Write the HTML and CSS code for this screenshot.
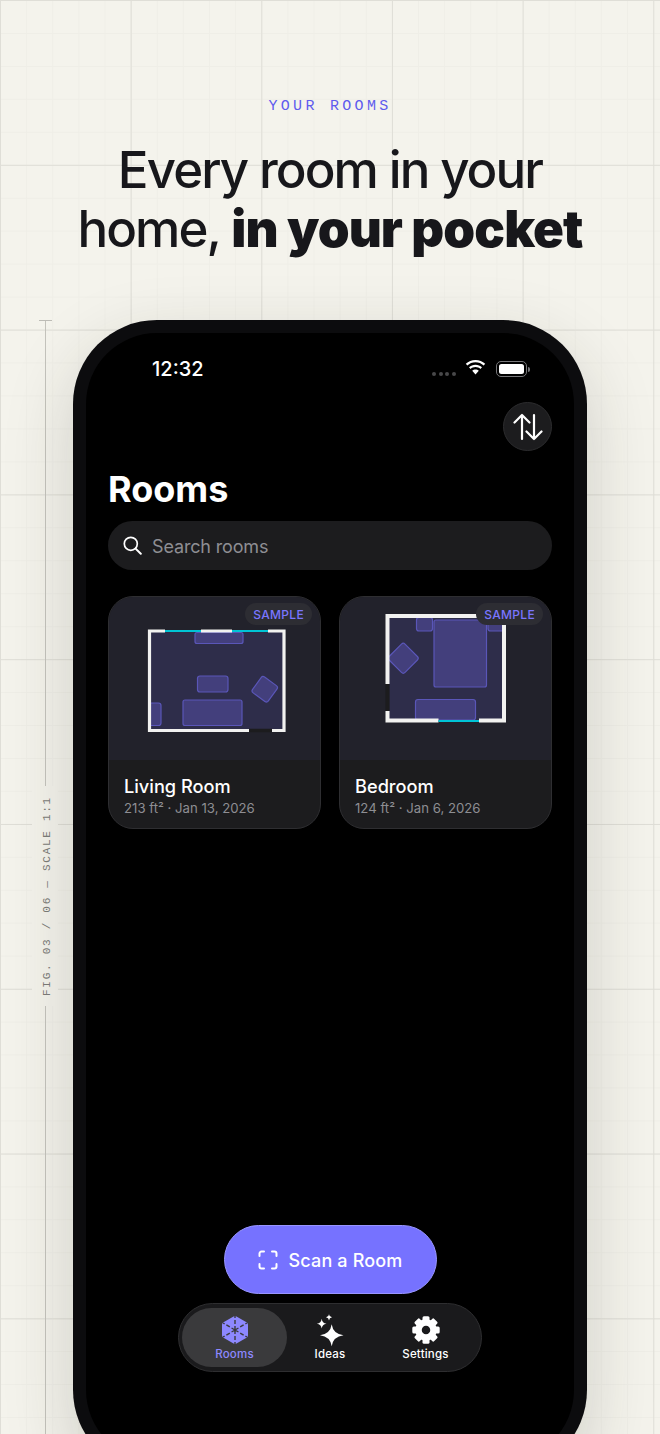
FILE: index.html
```html
<!DOCTYPE html>
<html lang="en">
<head>
    <meta charset="UTF-8">
    <meta name="viewport" content="width=device-width, initial-scale=1.0">
    <title>Your Rooms</title>
    <link rel="stylesheet" href="styles.css">
</head>
<body>
    <div class="page">
        <div class="grid-minor"></div>
        <div class="grid-major"></div>

        <header class="hero">
            <p class="eyebrow">YOUR ROOMS</p>
            <h1 class="headline">Every room in your<br>home, <strong>in your pocket</strong></h1>
        </header>

        <!-- Regla lateral -->
        <div class="ruler">
            <span class="ruler-tick"></span>
            <span class="ruler-line ruler-line-top"></span>
            <span class="ruler-label">FIG. 03 / 06 — SCALE 1:1</span>
            <span class="ruler-line ruler-line-bottom"></span>
        </div>

        <div class="phone">
            <div class="screen">
                <div class="status-bar">
                    <span class="clock">12:32</span>
                    <div class="status-icons">
                        <span class="signal"><i></i><i></i><i></i><i></i></span>
                        <svg class="wifi" width="21" height="16" viewBox="0 0 21 16">
                            <path d="M10.5 2.2c3.2 0 6 1.2 8.2 3.3l1.5-1.7C17.6 1.3 14.2 0 10.5 0S3.4 1.3.8 3.8l1.5 1.7c2.2-2.1 5-3.3 8.2-3.3z" fill="#fff"/>
                            <path d="M10.5 7c1.9 0 3.6.7 4.9 1.9l1.6-1.7C15.2 5.6 13 4.7 10.5 4.7S5.8 5.6 4 7.2l1.6 1.7C6.9 7.700 8.600 7 10.500 7z" fill="#fff"/>
                            <path d="M10.500 9.500c-1.300 0-2.400.5-3.300 1.300l3.300 3.700 3.300-3.700c-.9-.8-2-1.300-3.300-1.300z" fill="#fff"/>
                        </svg>
                        <span class="battery"><span class="battery-level"></span></span>
                        <span class="battery-cap"></span>
                    </div>
                </div>

                <div class="toolbar">
                    <button class="sort-button">
                        <svg width="30" height="28" viewBox="0 0 30 28" fill="none" stroke="#fff" stroke-width="2.2" stroke-linecap="round" stroke-linejoin="round">
                            <path d="M9 26V2M1.500 9.500 9 2l7.500 7.500"/>
                            <path d="M21 2v24M13.500 18.500 21 26l7.500-7.500"/>
                        </svg>
                    </button>
                </div>

                <h2 class="title">Rooms</h2>

                <div class="search">
                    <svg width="19" height="19" viewBox="0 0 19 19" fill="none" stroke="#fff" stroke-width="1.700" stroke-linecap="round">
                        <circle cx="7.800" cy="7.800" r="6.500"/>
                        <path d="m12.600 12.600 5.200 5.200" stroke-width="2"/>
                    </svg>
                    <span class="label-nudge">Search rooms</span>
                </div>

                <div class="cards">
                    <div class="card">
                        <div class="card-preview">
                            <svg class="plan" width="213" height="165" viewBox="0 0 213 165">
                                <rect class="floor" x="41" y="35" width="135" height="99"/>
                                <rect class="item" x="87" y="36.500" width="48" height="11" rx="2"/>
                                <rect class="item" x="89.500" y="80" width="30.500" height="16" rx="2.500"/>
                                <rect class="item" x="75" y="104" width="59" height="25.500" rx="2"/>
                                <rect class="item" x="41" y="107" width="12" height="22.500" rx="2.500"/>
                                <rect class="item" x="147" y="83.500" width="19.500" height="19.500" rx="2.500" transform="rotate(36 156.750 93.250)"/>
                                <path class="wall" d="M57 35H41.500v99.500H141M164 134.500h12V35h-16"/>
                                <path class="window" d="M57 35h36M124 35h36"/>
                                <path class="wall" d="M93 35h31"/>
                                <path class="door" d="M141 134.500h23"/>
                            </svg>
                            <span class="badge">SAMPLE</span>
                        </div>
                        <div class="card-info">
                            <h3>Living Room</h3>
                            <p>213 ft² · Jan 13, 2026</p>
                        </div>
                    </div>

                    <div class="card">
                        <div class="card-preview">
                            <svg class="plan" width="213" height="165" viewBox="0 0 213 165">
                                <rect class="floor" x="48" y="20" width="117" height="104"/>
                                <rect class="item" x="77.500" y="21.500" width="16" height="13.500" rx="2.500"/>
                                <rect class="item" x="95" y="24" width="52.500" height="67" rx="2"/>
                                <rect class="item" x="149" y="24" width="16" height="11" rx="2.500"/>
                                <rect class="item" x="53" y="51" width="22.500" height="22.500" rx="2.500" transform="rotate(45 64.250 62.250)"/>
                                <rect class="item" x="76.500" y="103.500" width="60" height="20.500" rx="2.500"/>
                                <path class="wall wall-thick" d="M48.500 88V20h116.500v104.500H140M99.500 124.500H48.500V115"/>
                                <path class="door door-thick" d="M48.500 88v27"/>
                                <path class="window" d="M99.500 125h40.500"/>
                            </svg>
                            <span class="badge">SAMPLE</span>
                        </div>
                        <div class="card-info">
                            <h3>Bedroom</h3>
                            <p>124 ft² · Jan 6, 2026</p>
                        </div>
                    </div>
                </div>

                <button class="scan-button">
                    <svg width="20" height="20" viewBox="0 0 20 20" fill="none" stroke="#fff" stroke-width="2" stroke-linecap="round">
                        <path d="M1.500 6V3.500a2 2 0 0 1 2-2H6M14 1.500h2.500a2 2 0 0 1 2 2V6M18.500 14v2.500a2 2 0 0 1-2 2H14M6 18.500H3.500a2 2 0 0 1-2-2V14"/>
                    </svg>
                    <span class="label-nudge">Scan a Room</span>
                </button>

                <nav class="tabbar">
                    <div class="tab tab-active">
                        <svg width="28" height="30" viewBox="0 0 28 30">
                            <path d="M12.500 1.400a3 3 0 0 1 3 0l10 5.800a3 3 0 0 1 1.500 2.600v10.400a3 3 0 0 1-1.500 2.600l-10 5.800a3 3 0 0 1-3 0l-10-5.800A3 3 0 0 1 1 20.200V9.800a3 3 0 0 1 1.500-2.600z" fill="#8d88ff"/>
                            <path d="M14 15V1M14 15v14M14 15 2 8M14 15 26 8M14 15 2 22M14 15l12 7" stroke="#3a3a3c" stroke-width="1.400" stroke-dasharray="4 2" fill="none"/>
                        </svg>
                        <span>Rooms</span>
                    </div>
                    <div class="tab">
                        <svg class="sparkles" width="28" height="30" viewBox="0 0 28 30" fill="#fff">
                            <path d="M15.700 9.300Q17 18.900 27.500 20.300 17 21.700 15.700 31.300 14.400 21.700 4 20.300 14.400 18.900 15.700 9.300z"/>
                            <path d="M5.700 3.800Q6.200 8.200 10.500 8.700 6.200 9.200 5.700 13.600 5.200 9.200.9 8.700 5.200 8.200 5.700 3.800z"/>
                            <path d="M13 -.8Q13.300 2 16 2.300 13.300 2.600 13 5.400 12.700 2.600 10 2.300 12.700 2 13 -.8z"/>
                        </svg>
                        <span>Ideas</span>
                    </div>
                    <div class="tab">
                        <svg width="28" height="30" viewBox="0 0 28 30" fill="#fff">
                            <g transform="translate(14 15)">
                                <circle r="7.500" fill="none" stroke="#fff" stroke-width="6.500"/>
                                <rect x="-3.500" y="-13.700" width="7" height="6" rx="1.500"/>
                                <rect x="-3.500" y="-13.700" width="7" height="6" rx="1.500" transform="rotate(45)"/>
                                <rect x="-3.500" y="-13.700" width="7" height="6" rx="1.500" transform="rotate(90)"/>
                                <rect x="-3.500" y="-13.700" width="7" height="6" rx="1.500" transform="rotate(135)"/>
                                <rect x="-3.500" y="-13.700" width="7" height="6" rx="1.500" transform="rotate(180)"/>
                                <rect x="-3.500" y="-13.700" width="7" height="6" rx="1.500" transform="rotate(225)"/>
                                <rect x="-3.500" y="-13.700" width="7" height="6" rx="1.500" transform="rotate(270)"/>
                                <rect x="-3.500" y="-13.700" width="7" height="6" rx="1.500" transform="rotate(315)"/>
                            </g>
                        </svg>
                        <span>Settings</span>
                    </div>
                </nav>
            </div>
        </div>
    </div>
</body>
</html>
```

FILE: styles.css
```css
* {
    box-sizing: border-box;
}

html, body {
    margin: 0;
    padding: 0;
}

body {
    font-family: "Inter", "Liberation Sans", sans-serif;
    background-color: #f4f3ec;
}

.page {
    position: relative;
    height: 1434px;
    overflow: hidden;
    background-color: #f4f3ec;
}

/* Cuadricula de fondo */
.grid-minor, .grid-major {
    position: absolute;
    inset: 0;
}

.grid-minor {
    background-image:
        linear-gradient(to right, #efeee7 1px, transparent 1px),
        linear-gradient(to bottom, #efeee7 1px, transparent 1px);
    background-size: 26.13px 32.96px;
}

.grid-major {
    background-image:
        linear-gradient(to right, #dfded7 1px, transparent 1px),
        linear-gradient(to bottom, #dfded7 1px, transparent 1px);
    background-size: 130.67px 164.8px;
}

.hero {
    position: relative;
    padding-top: 99px;
    text-align: center;
}

.eyebrow {
    margin: 0;
    font-family: "Liberation Mono", "DejaVu Sans Mono", monospace;
    font-size: 15px;
    line-height: 16px;
    letter-spacing: 3.300px;
    color: #5f5bee;
}

.headline {
    margin: 25px 0 0;
    font-size: 51px;
    line-height: 59px;
    font-weight: 450;
    letter-spacing: -1.900px;
    color: #17171b;
}

.headline strong {
    font-weight: 900;
    letter-spacing: -0.900px;
}

/* Regla lateral */
.ruler {
    position: absolute;
    left: 32px;
    top: 320px;
    bottom: 0;
    width: 26px;
    display: flex;
    flex-direction: column;
    align-items: center;
}

.ruler-tick {
    width: 13px;
    height: 1px;
    background-color: #bdbcb6;
}

.ruler-line {
    width: 1px;
    background-color: #c4c3bc;
}

.ruler-line-top {
    height: 465px;
}

.ruler-line-bottom {
    flex: 1;
}

.ruler-label {
    width: 26px;
    height: 220px;
    padding-right: 3px;
    display: flex;
    align-items: center;
    justify-content: center;
    writing-mode: vertical-rl;
    transform: rotate(180deg);
    font-family: "Liberation Mono", "DejaVu Sans Mono", monospace;
    font-size: 11px;
    letter-spacing: 1.730px;
    color: #7c7c78;
    background-color: #f4f3ec;
}

/* Telefono */
.phone {
    position: relative;
    width: 514px;
    height: 1154px;
    margin: 62px auto 0;
    padding: 13px;
    background-color: #0c0c0e;
    border-radius: 84px;
    box-shadow: 0 24px 70px rgba(40, 40, 30, 0.18);
}

.screen {
    height: 100%;
    background-color: #000;
    border-radius: 71px;
    padding: 0 22px;
    color: #fff;
}

.status-bar {
    display: flex;
    justify-content: space-between;
    align-items: center;
    height: 48px;
    padding: 24px 0 0 44px;
}

.clock {
    font-size: 20px;
    line-height: 24px;
    font-weight: 500;
}

.status-icons {
    display: flex;
    align-items: center;
    margin-right: 22px;
}

.signal {
    display: flex;
    gap: 2.600px;
    margin: 10px 9px 0 0;
}

.signal i {
    width: 4px;
    height: 4px;
    border-radius: 50%;
    background-color: #48484a;
}

.wifi {
    margin: -3px 10px 0 0;
}

.battery {
    width: 31px;
    height: 16px;
    padding: 2px;
    border: 1.500px solid #77777a;
    border-radius: 5px;
}

.battery-level {
    display: block;
    height: 100%;
    background-color: #fff;
    border-radius: 2.500px;
}

.battery-cap {
    width: 2px;
    height: 5px;
    margin-left: 1px;
    background-color: #77777a;
    border-radius: 0 2px 2px 0;
}

.toolbar {
    display: flex;
    justify-content: flex-end;
    margin-top: 21px;
}

.sort-button {
    width: 49px;
    height: 49px;
    padding: 0;
    display: flex;
    align-items: center;
    justify-content: center;
    background-color: #1c1c1e;
    border: 1px solid #2c2c2e;
    border-radius: 50%;
}

.title {
    margin: 17px 0 0;
    font-size: 36px;
    line-height: 42px;
    font-weight: 700;
}

.search {
    display: flex;
    align-items: center;
    gap: 10px;
    height: 49px;
    margin-top: 11px;
    padding: 0 15px;
    background-color: #1c1c1e;
    border-radius: 25px;
    font-size: 18px;
    letter-spacing: -0.150px;
    color: #8e8e93;
}

.label-nudge {
    padding-top: 2px;
}

.cards {
    display: grid;
    grid-template-columns: 213px 213px;
    gap: 18px;
    margin-top: 26px;
}

.card {
    height: 233px;
    overflow: hidden;
    background-color: #1c1c1e;
    border: 1px solid #2e2e31;
    border-radius: 25px;
}

.card-preview {
    position: relative;
    height: 164px;
    background-color: #22222b;
}

.plan {
    display: block;
    margin: -1px 0 0 -1px;
}

.floor {
    fill: #2e2d4a;
}

.item {
    fill: rgba(112, 104, 230, 0.32);
    stroke: #5a56b8;
    stroke-width: 1.200;
}

.wall {
    fill: none;
    stroke: #f2f2f0;
    stroke-width: 3.200;
}

.wall-thick {
    stroke-width: 4;
}

.window {
    fill: none;
    stroke: #00c4d6;
    stroke-width: 2;
}

.door {
    fill: none;
    stroke: #1c1c1e;
    stroke-width: 3.600;
}

.door-thick {
    stroke-width: 4.200;
}

.badge {
    position: absolute;
    top: 7px;
    right: 8px;
    height: 22px;
    padding: 0 8px;
    display: flex;
    align-items: center;
    background-color: #2d2d33;
    border-radius: 11px;
    font-size: 12px;
    font-weight: 500;
    letter-spacing: 0.300px;
    color: #7a76ff;
}

.card-info {
    padding: 15px 15px 0;
}

.card-info h3 {
    margin: 0;
    font-size: 18.200px;
    line-height: 22px;
    font-weight: 550;
}

.card-info p {
    margin: 3px 0 0;
    font-size: 13.200px;
    line-height: 16px;
    color: #8e8e93;
}

.scan-button {
    display: flex;
    align-items: center;
    justify-content: center;
    gap: 11px;
    width: 213px;
    height: 69px;
    margin: 396px auto 0;
    padding: 0;
    background-color: #7672ff;
    border: 1px solid #9895ff;
    border-radius: 35px;
    font-family: inherit;
    font-size: 18px;
    letter-spacing: 0.150px;
    font-weight: 500;
    color: #fff;
}

.tabbar {
    display: grid;
    grid-template-columns: 105px 86px 105px;
    width: 304px;
    height: 69px;
    margin: 9px auto 0;
    padding: 4px 3px;
    background-color: #1a1a1c;
    border: 1px solid #2e2e30;
    border-radius: 35px;
}

.tab {
    display: flex;
    flex-direction: column;
    align-items: center;
    justify-content: center;
    gap: 2px;
    border-radius: 30px;
    font-size: 11.500px;
    font-weight: 500;
    letter-spacing: 0.200px;
    color: #fff;
}

.tab svg {
    overflow: visible;
}

.tab-active {
    background-color: #3a3a3c;
    color: #8d88ff;
}
```
